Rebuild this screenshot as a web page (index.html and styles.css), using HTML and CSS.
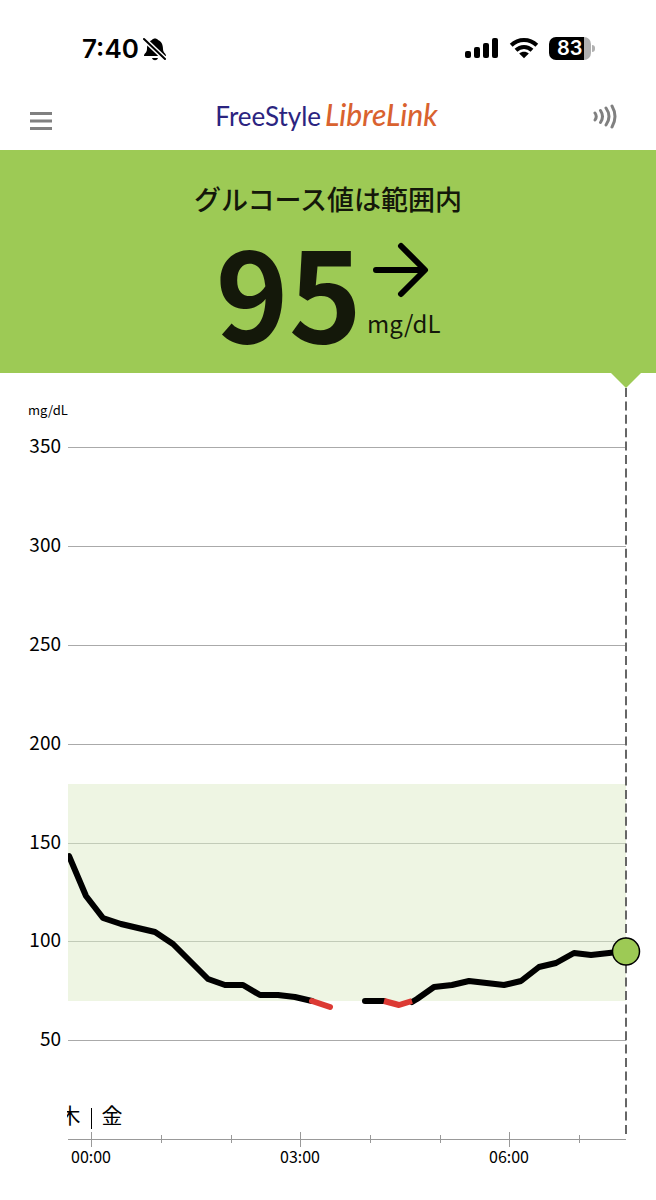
FILE: index.html
```html
<!DOCTYPE html>
<html lang="ja">
<head>
    <meta charset="UTF-8">
    <title>FreeStyle LibreLink</title>
    <meta name="viewport" content="width=device-width, initial-scale=1.0">
    <link rel="stylesheet" href="styles.css">
</head>
<body>
    <div class="status-bar">
        <div class="status-time">
            <span>7:40</span>
            <svg width="24" height="24" viewBox="0 0 24 24" aria-hidden="true">
                <path d="M1 19c0-3 3-3 3-7 0-5 2-8 5-9 1-2 5-2 6 0 3 1 5 4 5 9 0 4 3 4 3 7z"/>
                <path d="M9 21h6c-1 3-5 3-6 0z"/>
                <path class="slash-gap" d="M1 2l21 20"/>
                <path class="slash" d="M1 2l21 20"/>
            </svg>
        </div>
        <div class="status-icons">
            <svg width="34" height="22" viewBox="0 0 34 22" aria-hidden="true">
                <rect x="0" y="14" width="6" height="7" rx="2"/>
                <rect x="9" y="10" width="6" height="11" rx="2"/>
                <rect x="18" y="6" width="6" height="15" rx="2"/>
                <rect x="27" y="1" width="6" height="20" rx="2"/>
            </svg>
            <svg class="wifi" width="30" height="22" viewBox="0 0 30 22" aria-hidden="true">
                <path class="wave" d="M2.2 8.2c7.200-7 18.400-7 25.600 0"/>
                <path class="wave" d="M7 13.200c4.500-4.400 11.500-4.400 16 0"/>
                <path d="M10.200 16.500c2.700-2.400 6.900-2.400 9.600 0L15 21.300z"/>
            </svg>
            <div class="battery"><span class="battery-level">83</span></div>
        </div>
    </div>

    <header class="app-header">
        <button class="icon-button" type="button" aria-label="メニュー">
            <svg width="24" height="20" viewBox="0 0 24 20"><path d="M1 2.500h22M1 10h22M1 17.500h22"/></svg>
        </button>
        <h1 class="logo"><span class="logo-free">FreeStyle</span><span class="logo-link">LibreLink</span></h1>
        <button class="icon-button scan" type="button" aria-label="スキャン">
            <svg width="26" height="26" viewBox="0 0 26 26">
                <path d="M3 10q2.500 3.500 0 7M8.500 7.500q4 6 0 12M14 5q6 8.500 0 17M20 3q6 10.500 0 21"/>
            </svg>
        </button>
    </header>

    <main>
        <section class="reading">
            <h2>グルコース値は範囲内</h2>
            <div class="reading-row">
                <span class="value">95</span>
                <div class="trend">
                    <svg width="62" height="58" viewBox="0 0 62 58" aria-hidden="true">
                        <path d="M9 29h48M34 5l24 24-24 24"/>
                    </svg>
                    <span>mg/dL</span>
                </div>
            </div>
        </section>

        <svg class="chart" viewBox="0 0 656 827" role="img" aria-label="グルコースグラフ">
            <defs>
                <clipPath id="plot"><rect x="68" y="0" width="560" height="780"/></clipPath>
                <clipPath id="days"><rect x="67" y="720" width="560" height="60"/></clipPath>
            </defs>

            <!-- target range 70-180 -->
            <rect class="target" x="68" y="411" width="558" height="217"/>
            <!-- grid -->
            <path class="grid" d="M68 74h558M68 173h558M68 272h558M68 371h558M68 667h558"/>
            <path class="grid in-range" d="M68 470h558M68 568h558"/>

            <!-- y labels -->
            <text class="unit" x="28" y="42">mg/dL</text>
            <g class="y-labels">
                <text x="61" y="80">350</text>
                <text x="61" y="179">300</text>
                <text x="61" y="278">250</text>
                <text x="61" y="377">200</text>
                <text x="61" y="476">150</text>
                <text x="61" y="574">100</text>
                <text x="61" y="673">50</text>
            </g>

            <!-- time axis -->
            <path class="axis" d="M68 766h558"/>
            <path class="axis" d="M91 759v15M300 759v15M509 759v15"/>
            <path class="axis" d="M161 762v8M231 762v8M370 762v8M440 762v8M579 762v8"/>
            <g class="x-labels">
                <text x="91" y="790">00:00</text>
                <text x="300" y="790">03:00</text>
                <text x="509" y="790">06:00</text>
            </g>
            <g class="days" clip-path="url(#days)">
                <text x="70" y="750">木</text>
                <text x="112" y="750">金</text>
            </g>
            <path class="day-split" d="M91 735v21"/>

            <!-- now marker -->
            <path class="now" d="M626 15v748"/>
            <path class="pointer" d="M611 0h30l-15 15z"/>

            <!-- glucose trace -->
            <g class="trace" clip-path="url(#plot)">
                <polyline points="69,483 86,523 103,545 121,551 138,555 155,559 173,571 190,588 208,606 225,612 243,612 260,622 278,622 295,624 312,628"/>
                <path d="M365 628h19"/>
                <polyline points="412,629 417,626 434,614 452,612 469,608 504,612 521,608 539,594 556,590 574,580 591,582 609,580 626,578"/>
                <polyline class="low" points="312,628 330,634"/>
                <polyline class="low flat" points="384,628 399,632 412,628"/>
            </g>
            <circle class="current" cx="626" cy="578.500" r="13.500"/>
        </svg>
    </main>
</body>
</html>
```

FILE: styles.css
```css
* {
    box-sizing: border-box;
}
body {
    margin: 0;
    background: #fff;
    color: #000;
    font-family: "Noto Sans CJK JP", "Noto Sans", sans-serif;
}
svg {
    display: block;
}

/* phone status bar */
.status-bar {
    display: flex;
    justify-content: space-between;
    align-items: center;
    height: 88px;
    padding: 8px 61px 0 82px;
}
.status-time {
    display: flex;
    align-items: center;
    gap: 4px;
    padding-top: 2px;
    font: 600 26px/32px Inter, sans-serif;
}
.slash {
    stroke: #000;
    stroke-width: 2;
    stroke-linecap: round;
}
.slash-gap {
    stroke: #fff;
    stroke-width: 5;
}
.status-icons {
    display: flex;
    align-items: center;
    gap: 10px;
}
.wave {
    fill: none;
    stroke: #000;
    stroke-width: 4;
}
.battery {
    position: relative;
    width: 42px;
    height: 23px;
    margin-right: 4px;
    border-radius: 7px;
    background: linear-gradient(90deg, #000 84%, #b0b0b0 84%);
}
.battery::after {
    content: "";
    position: absolute;
    left: 43px;
    top: 8px;
    width: 3px;
    height: 7px;
    border-radius: 0 3px 3px 0;
    background: #b0b0b0;
}
.battery-level {
    display: block;
    padding-left: 8px;
    color: #fff;
    font: 600 20px/23px Inter, sans-serif;
}

/* app header */
.app-header {
    display: flex;
    justify-content: space-between;
    align-items: center;
    height: 62px;
    padding: 0 38px 6px 29px;
}
.icon-button {
    padding: 10px 0 0;
    border: 0;
    background: none;
    cursor: pointer;
}
.icon-button path {
    fill: none;
    stroke: #808080;
    stroke-width: 3;
}
.icon-button.scan {
    padding: 0;
}
.scan path {
    stroke-linecap: round;
}
.logo {
    display: flex;
    align-items: baseline;
    gap: 4px;
    margin: 0;
    padding: 0 0 2px 8px;
    font: 400 26px/36px Lato, sans-serif;
}
.logo-free {
    color: #2b2480;
}
.logo-link {
    color: #d9622f;
    font-size: 30px;
    font-style: italic;
    font-weight: 500;
}

/* current reading */
.reading {
    display: flex;
    flex-direction: column;
    align-items: center;
    min-height: 223px;
    padding-top: 29px;
    background: #9dca55;
    color: #14180a;
}
.reading h2 {
    margin: 0;
    font-size: 27px;
    font-weight: 500;
    line-height: 40px;
}
.reading-row {
    display: flex;
    gap: 5px;
}
.value {
    font-size: 124px;
    font-weight: 700;
    line-height: 140px;
}
.trend {
    padding-top: 22px;
    font-size: 24px;
    line-height: 48px;
}
.trend path {
    fill: none;
    stroke: #000;
    stroke-width: 6;
    stroke-linecap: round;
    stroke-linejoin: round;
}

/* chart */
.chart {
    width: 100%;
    height: auto;
}
.grid,
.axis {
    fill: none;
    stroke: #aaa;
    shape-rendering: crispEdges;
}
.grid.in-range {
    stroke: #c2cbb8;
}
.axis {
    stroke: #999;
}
.target {
    fill: #eef5e3;
}
.unit {
    font-size: 13px;
}
.y-labels {
    font-size: 19px;
    text-anchor: end;
}
.x-labels {
    font-size: 16px;
    text-anchor: middle;
}
.days {
    font-size: 21px;
    text-anchor: middle;
}
.day-split {
    stroke: #000;
    shape-rendering: crispEdges;
}
.now {
    stroke: #666;
    stroke-width: 2;
    stroke-dasharray: 9 4.400;
}
.pointer {
    fill: #9dca55;
}
.trace {
    fill: none;
    stroke: #000;
    stroke-width: 6;
    stroke-linecap: round;
    stroke-linejoin: round;
}
.low {
    stroke: #dc3a34;
}
.low.flat {
    stroke-linecap: butt;
}
.current {
    fill: #9dca55;
    stroke: #000;
    stroke-width: 1.500;
}
```
